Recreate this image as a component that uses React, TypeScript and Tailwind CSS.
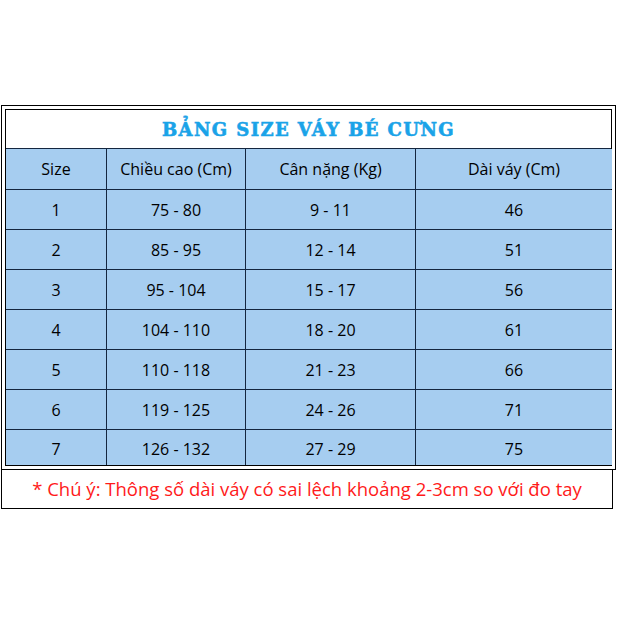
import React from "react";

const rows = [
  ["1", "75 - 80", "9 - 11", "46"],
  ["2", "85 - 95", "12 - 14", "51"],
  ["3", "95 - 104", "15 - 17", "56"],
  ["4", "104 - 110", "18 - 20", "61"],
  ["5", "110 - 118", "21 - 23", "66"],
  ["6", "119 - 125", "24 - 26", "71"],
  ["7", "126 - 132", "27 - 29", "75"],
];

const header = ["Size", "Chiều cao (Cm)", "Cân nặng (Kg)", "Dài váy (Cm)"];

export default function App() {
  return (
    <div className="w-[617px] h-[617px] bg-white pt-[105px]" style={{ fontFamily: '"Open Sans", "Noto Sans", sans-serif' }}>
      <div className="ml-[1px] w-[615px] border border-black p-[3px]">
        <div className="border border-black">
          <div
            className="h-[38px] flex items-center justify-center text-[18px] font-bold tracking-[1.4px] text-[#1aa3e8] bg-white [-webkit-text-stroke:0.6px_#1aa3e8]"
            style={{ fontFamily: '"DejaVu Serif", serif' }}
          >
            BẢNG SIZE VÁY BÉ CƯNG
          </div>
          <div className="grid grid-cols-[100px_138px_169px_196px] gap-px bg-[#14263f] border-t border-[#14263f]">
            {header.map((h) => (
              <div key={h} className="h-[40px] bg-[#a6cdf0] flex items-center justify-center text-[16px] text-black">
                {h}
              </div>
            ))}
            {rows.map((r, i) =>
              r.map((c, j) => (
                <div
                  key={i + "-" + j}
                  className={(i === rows.length - 1 ? "h-[35px] pt-[2px] " : "h-[39px] ") + "bg-[#a6cdf0] flex items-center justify-center text-[16px] text-black"}
                >
                  {c}
                </div>
              ))
            )}
          </div>
        </div>
      </div>
      <div className="ml-[1px] w-[612px] h-[39px] border-l border-r border-b border-black flex items-center justify-center text-[18.5px] text-[#ff1a1a]">
        * Chú ý: Thông số dài váy có sai lệch khoảng 2-3cm so với đo tay
      </div>
    </div>
  );
}
